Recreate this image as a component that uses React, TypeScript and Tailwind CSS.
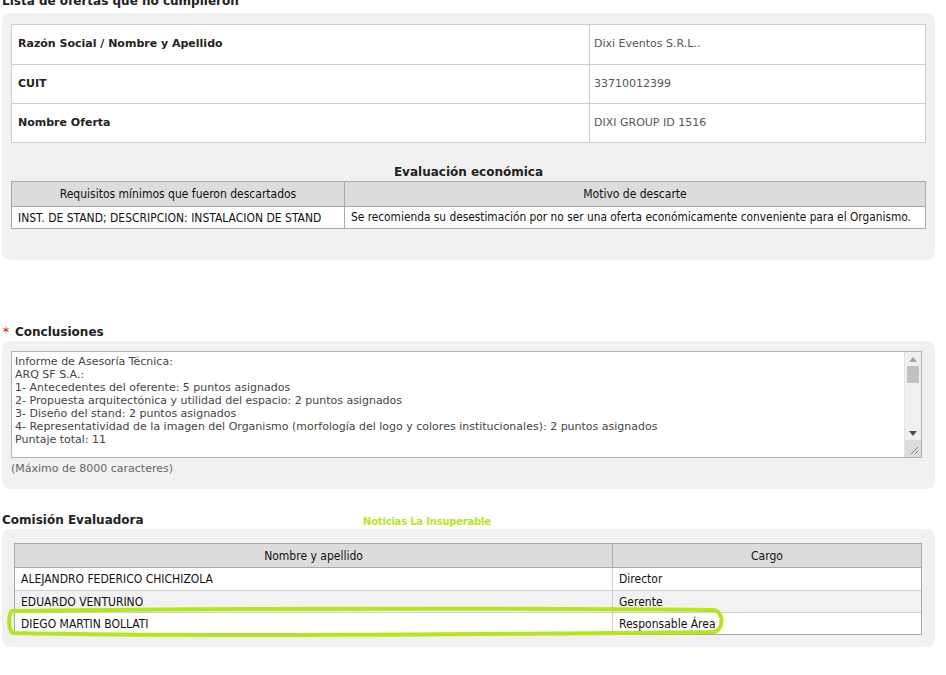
import React from "react";

const V = { fontFamily: '"DejaVu Sans", Verdana, sans-serif' };
const T = { fontFamily: '"DejaVu Sans Condensed", "DejaVu Sans", Tahoma, sans-serif' };

function Scrollbar() {
  return (
    <div className="w-[17px] flex flex-col bg-[#f0f0f0] border-l border-[#e4e4e4]">
      <div className="h-[14px] flex items-center justify-center">
        <svg width="8" height="5" viewBox="0 0 8 5"><path d="M0 5 L4 0 L8 5 Z" fill="#a3a3a3" /></svg>
      </div>
      <div className="mx-[2px] h-[17px] bg-[#c1c1c1]" />
      <div className="flex-1" />
      <div className="h-[14px] flex items-center justify-center">
        <svg width="8" height="5" viewBox="0 0 8 5"><path d="M0 0 L4 5 L8 0 Z" fill="#505050" /></svg>
      </div>
      <div className="h-[17px] bg-[#dcdcdc] flex items-end justify-end pr-[2px] pb-[2px]">
        <svg width="10" height="10" viewBox="0 0 10 10">
          <path d="M9 2 L2 9 M9 6 L6 9" stroke="#8a8a8a" strokeWidth="1" />
        </svg>
      </div>
    </div>
  );
}

export default function App() {
  const lines = [
    "Informe de Asesoría Técnica:",
    "ARQ SF S.A.:",
    "1- Antecedentes del oferente: 5 puntos asignados",
    "2- Propuesta arquitectónica y utilidad del espacio: 2 puntos asignados",
    "3- Diseño del stand: 2 puntos asignados",
    "4- Representatividad de la imagen del Organismo (morfología del logo y colores institucionales): 2 puntos asignados",
    "Puntaje total: 11",
  ];
  return (
    <div className="w-[946px] h-[675px] bg-white overflow-hidden relative text-[#333]" style={V}>
      <div className="mt-[-6px]">
        <div className="pl-[2px] h-[19px] text-[12px] font-bold leading-[14px] text-[#222]">Lista de ofertas que no cumplieron</div>
        <div className="mx-[2px] w-[933px] h-[247px] bg-[#f1f1f1] rounded-[8px] pt-[11px] px-[9px]">
          <div className="border border-[#cccccc] bg-white">
            {[
              ["Razón Social / Nombre y Apellido", "Dixi Eventos S.R.L.."],
              ["CUIT", "33710012399"],
              ["Nombre Oferta", "DIXI GROUP ID 1516"],
            ].map(([k, v], i) => (
              <div key={i} className={`flex h-[39px] ${i > 0 ? "border-t border-[#cccccc]" : ""}`}>
                <div className="w-[578px] border-r border-[#cccccc] flex items-center pl-[6px] text-[11px] font-bold text-[#222]">{k}</div>
                <div className="flex-1 flex items-center pl-[4px] text-[11px] text-[#555]">{v}</div>
              </div>
            ))}
          </div>
          <div className="mt-[22px] text-center text-[12px] font-bold text-[#222] leading-[14px] h-[16px]">Evaluación económica</div>
          <div className="border border-[#a9a9a9] text-[12px] text-[#111]" style={T}>
            <div className="flex h-[25px] bg-[#dcdcdc] border-b border-[#a9a9a9]">
              <div className="w-[333px] border-r border-[#a9a9a9] flex items-center justify-center">Requisitos mínimos que fueron descartados</div>
              <div className="flex-1 flex items-center justify-center">Motivo de descarte</div>
            </div>
            <div className="flex h-[21px] bg-white">
              <div className="w-[333px] border-r border-[#a9a9a9] flex items-center pl-[6px]">INST. DE STAND; DESCRIPCION: INSTALACION DE STAND</div>
              <div className="flex-1 flex items-center pl-[6px] text-[11.8px]">Se recomienda su desestimación por no ser una oferta económicamente conveniente para el Organismo.</div>
            </div>
          </div>
        </div>
        <div className="h-[62px]" />
        <div className="pl-[3px] h-[19px] flex items-center text-[12px] font-bold text-[#222]">
          <span className="text-[#d00] font-normal mr-[6px]">*</span>Conclusiones
        </div>
        <div className="mx-[2px] w-[933px] h-[148px] bg-[#f1f1f1] rounded-[8px] pt-[10px] pl-[9px] pr-[13px]">
          <div className="flex h-[107px] border border-[#b3b3b3] bg-white">
            <div className="flex-1 overflow-hidden pl-[3px] pt-[3px] text-[11px] leading-[13px] text-[#444] whitespace-nowrap">
              {lines.map((l, i) => (<div key={i}>{l}</div>))}
            </div>
            <Scrollbar />
          </div>
          <div className="mt-[3px] text-[11px] text-[#666]">(Máximo de 8000 caracteres)</div>
        </div>
        <div className="h-[21px]" />
        <div className="pl-[2px] h-[19px] flex items-center text-[12px] font-bold text-[#222] relative">
          Comisión Evaluadora
          <span className="absolute left-[363px] top-[4px] text-[10px] font-bold text-[#b5e61d] tracking-[-0.2px]" style={{ fontFamily: '"Comic Sans MS", "DejaVu Sans", sans-serif' }}>Noticias La Insuperable</span>
        </div>
        <div className="mx-[2px] w-[933px] h-[118px] bg-[#f1f1f1] rounded-[8px] pt-[14px] pl-[12px] pr-[13px]">
          <div className="border border-[#a9a9a9] text-[12px] text-[#111]" style={T}>
            <div className="flex h-[24px] bg-[#dcdcdc] border-b border-[#a9a9a9]">
              <div className="w-[598px] border-r border-[#a9a9a9] flex items-center justify-center">Nombre y apellido</div>
              <div className="flex-1 flex items-center justify-center">Cargo</div>
            </div>
            {[
              ["ALEJANDRO FEDERICO CHICHIZOLA", "Director", "bg-white"],
              ["EDUARDO VENTURINO", "Gerente", "bg-[#f2f2f2]"],
              ["DIEGO MARTIN BOLLATI", "Responsable Área", "bg-white"],
            ].map(([n, c, bg], i) => (
              <div key={i} className={`flex h-[22px] ${bg} ${i > 0 ? "border-t border-[#cfcfcf]" : ""}`}>
                <div className="w-[598px] border-r border-[#cfcfcf] flex items-center pl-[6px]">{n}</div>
                <div className="flex-1 flex items-center pl-[6px]">{c}</div>
              </div>
            ))}
          </div>
        </div>
      </div>
      <svg className="absolute left-0 top-0 pointer-events-none" width="946" height="675">
        <path d="M12 611 C 200 609, 500 608, 714 610 C 724 612, 724 630, 714 632 C 500 634, 200 637, 13 633 C 8 630, 8 615, 12 611 Z" fill="none" stroke="#b5e61d" strokeWidth="4" />
      </svg>
    </div>
  );
}
